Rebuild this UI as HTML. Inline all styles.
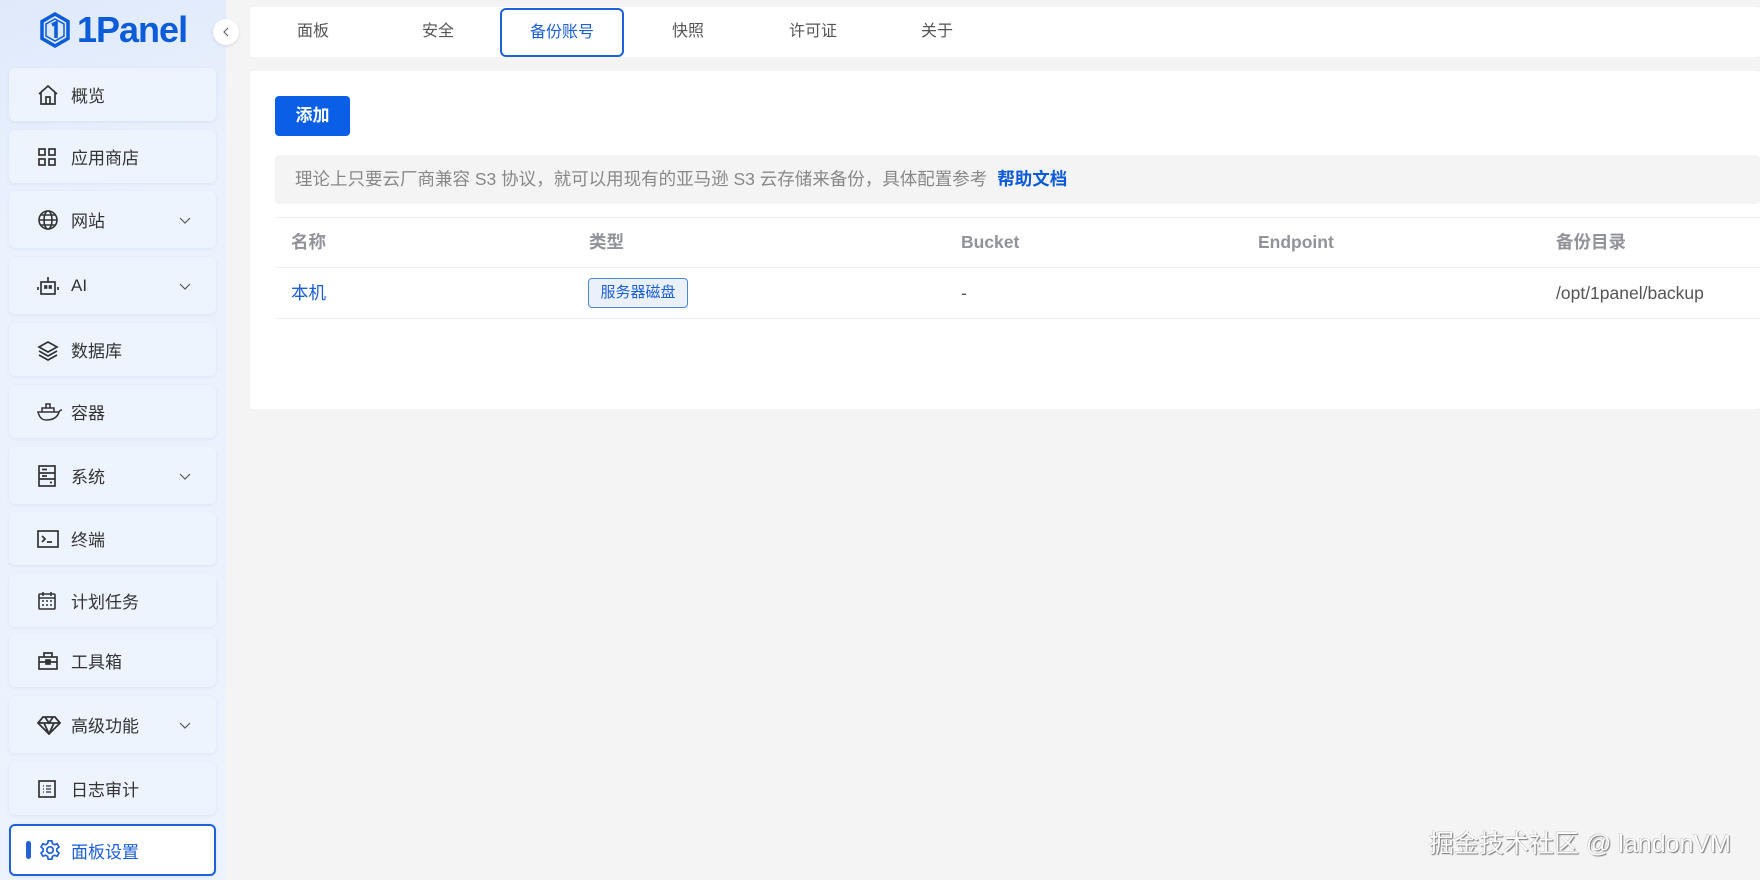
<!DOCTYPE html>
<html><head><meta charset="utf-8"><style>
*{margin:0;padding:0;box-sizing:border-box}
body{width:1760px;height:880px;overflow:hidden;background:#f4f4f5;font-family:"Liberation Sans","Noto Sans CJK SC",sans-serif;position:relative;color:#333}
.side{position:absolute;left:0;top:0;width:226px;height:880px;background:linear-gradient(160deg,#dfe9fb 0%,#ebf2fd 25%,#edf3fd 100%)}
.logo{position:absolute;left:39px;top:9px;display:flex;align-items:center;gap:6px}
.logo span{font-size:36px;font-weight:bold;color:#0a5cd8;letter-spacing:-1px}
.item{position:absolute;left:9px;width:207px;background:#eef4fe;border-radius:6px;box-shadow:0 1px 3px rgba(120,150,200,.15);display:flex;align-items:center;font-size:17px;color:#333}
.item svg{position:absolute;left:28px}
.item .t{position:absolute;left:62px}
.item .ch{position:absolute;left:168px;top:50%;margin-top:-6px}
.item.act{background:#fff;border:2px solid #1f62d6;color:#1b5ed6}
.bar{position:absolute;left:15px;width:5px;height:18px;border-radius:3px;background:#1f62d6}
.col{position:absolute;left:213px;top:19px;width:26px;height:26px;border-radius:50%;background:#fff;box-shadow:0 1px 3px rgba(0,0,0,.12)}
.tabs{position:absolute;left:250px;top:7px;width:1510px;height:50px;background:#fff;border-radius:4px}
.tab{position:absolute;top:0;height:50px;line-height:50px;font-size:16px;color:#555;transform:translateX(-50%)}
.tact{position:absolute;left:500px;top:8px;width:124px;height:49px;border:2px solid #1f62d6;border-radius:6px;color:#1b5ed6;font-size:16px;text-align:center;line-height:45px}
.card{position:absolute;left:250px;top:71px;width:1510px;height:338px;background:#fff;border-radius:4px}
.btn{position:absolute;left:275px;top:96px;width:75px;height:40px;background:#0a5fe6;border-radius:4px;color:#fff;font-size:17px;font-weight:bold;text-align:center;line-height:40px}
.note{position:absolute;left:275px;top:155px;width:1485px;height:49px;background:#f4f4f5;border-radius:4px;font-size:17.5px;color:#888;line-height:49px;padding-left:20px}
.note b{color:#0a5ad8;margin-left:10px}
.ln{position:absolute;left:275px;width:1485px;height:1px;background:#ebeef5}
.th{position:absolute;top:229px;height:26px;line-height:26px;font-size:17.5px;font-weight:bold;color:#909399}
.td{position:absolute;top:280px;height:26px;line-height:26px;font-size:17.5px;color:#555}
.tag{position:absolute;left:588px;top:278px;width:100px;height:30px;border:1px solid #4a85de;background:#eaf1fc;border-radius:4px;color:#1b5ed6;font-size:15px;text-align:center;line-height:28px}
.wm{position:absolute;left:1429px;top:824px;font-size:25px;color:#fff;text-shadow:1px 1px 1px #777,-0.5px -0.5px 0 #bbb}
</style></head><body>
<div class="side">
<div class="logo"><svg width="32" height="36" viewBox="0 0 32 36"><path d="M16 2 L29 9.5 V26.5 L16 34 L3 26.5 V9.5Z" fill="none" stroke="#0a5cd8" stroke-width="3.5"/><path d="M16 7 L25 12 V24 L16 29 L7 24 V12Z" fill="#dbe7fb" stroke="#0a5cd8" stroke-width="1.5"/><path d="M13 13 L17 11 V26" fill="none" stroke="#0a5cd8" stroke-width="3.5"/></svg><span>1Panel</span></div>
<div class="col"><svg width="26" height="26"><path d="M15 9 L11 13 L15 17" fill="none" stroke="#666" stroke-width="1.2"/></svg></div>

<div class="item" style="top:68px;height:53px"><svg width="22" height="22" viewBox="0 0 22 22" fill="none" stroke="#333" stroke-width="1.7"><path d="M2 10 L11 2 L20 10 M4 8 V20 H18 V8 M9 20 V13 H13 V20"/></svg><span class="t">概览</span></div>
<div class="item" style="top:130px;height:53px"><svg width="20" height="20" viewBox="0 0 20 20" fill="none" stroke="#333" stroke-width="1.7"><rect x="2" y="2" width="6" height="6"/><rect x="12" y="2" width="6" height="6"/><rect x="2" y="12" width="6" height="6"/><rect x="12" y="12" width="6" height="6"/></svg><span class="t">应用商店</span></div>
<div class="item" style="top:191px;height:57px"><svg width="22" height="22" viewBox="0 0 22 22" fill="none" stroke="#333" stroke-width="1.6"><circle cx="11" cy="11" r="9"/><ellipse cx="11" cy="11" rx="4" ry="9"/><path d="M2 11 H20 M4 6 H18 M4 16 H18"/></svg><span class="t">网站</span><svg class="ch" width="12" height="12" style="left:170px"><path d="M1 4 L6 9 L11 4" fill="none" stroke="#555" stroke-width="1.2"/></svg></div>
<div class="item" style="top:257px;height:57px"><svg width="22" height="22" viewBox="0 0 22 22" fill="none" stroke="#333" stroke-width="1.7"><rect x="4" y="7" width="14" height="12"/><path d="M11 2 V7 M1 12 V15 M21 12 V15"/><rect x="8" y="11" width="1.5" height="2" fill="#333"/><rect x="12.5" y="11" width="1.5" height="2" fill="#333"/></svg><span class="t">AI</span><svg class="ch" width="12" height="12" style="left:170px"><path d="M1 4 L6 9 L11 4" fill="none" stroke="#555" stroke-width="1.2"/></svg></div>
<div class="item" style="top:323px;height:53px"><svg width="22" height="22" viewBox="0 0 22 22" fill="none" stroke="#333" stroke-width="1.7"><path d="M11 3 L20 8 L11 13 L2 8Z M2 12 L11 17 L20 12 M2 16 L11 21 L20 16"/></svg><span class="t">数据库</span></div>
<div class="item" style="top:385px;height:53px"><svg width="26" height="20" viewBox="0 0 26 20" fill="none" stroke="#333" stroke-width="1.5"><path d="M1 10 H22 C20 17 14 18 9 18 C4 18 2 14 1 10Z M5 10 V6 H17 V10 M9 6 V2 H13 V6 M22 10 C23 8 24 8 25 8"/></svg><span class="t">容器</span></div>
<div class="item" style="top:447px;height:57px"><svg width="20" height="22" viewBox="0 0 20 22" fill="none" stroke="#333" stroke-width="1.7"><rect x="2" y="1" width="16" height="20"/><path d="M2 8 H18 M2 14 H18 M5 4.5 H10 M5 11 H10 M13 17.5 H15"/></svg><span class="t">系统</span><svg class="ch" width="12" height="12" style="left:170px"><path d="M1 4 L6 9 L11 4" fill="none" stroke="#555" stroke-width="1.2"/></svg></div>
<div class="item" style="top:512px;height:53px"><svg width="22" height="20" viewBox="0 0 22 20" fill="none" stroke="#333" stroke-width="1.7"><rect x="1" y="2" width="20" height="16"/><path d="M5 7 L8 10 L5 13 M10 13 H15"/></svg><span class="t">终端</span></div>
<div class="item" style="top:574px;height:53px"><svg width="20" height="20" viewBox="0 0 20 20" fill="none" stroke="#333" stroke-width="1.6"><rect x="2" y="3" width="16" height="15" rx="1"/><path d="M6 1 V5 M14 1 V5 M2 7 H18"/><path d="M5 10 H7 M9 10 H11 M13 10 H15 M5 14 H7 M9 14 H11 M13 14 H15" stroke-width="1.5"/></svg><span class="t">计划任务</span></div>
<div class="item" style="top:634px;height:53px"><svg width="22" height="20" viewBox="0 0 22 20" fill="none" stroke="#333" stroke-width="1.7"><rect x="2" y="6" width="18" height="12"/><path d="M7 6 V2 H15 V6 M2 11 H20"/><rect x="9" y="9" width="4" height="4" fill="#333"/></svg><span class="t">工具箱</span></div>
<div class="item" style="top:696px;height:57px"><svg width="24" height="20" viewBox="0 0 24 20" fill="none" stroke="#333" stroke-width="1.8"><path d="M6 2 H18 L23 8 L12 19 L1 8Z M1 8 H23 M8 2 L12 8 L16 2 M7 8 L12 19 L17 8"/></svg><span class="t">高级功能</span><svg class="ch" width="12" height="12" style="left:170px"><path d="M1 4 L6 9 L11 4" fill="none" stroke="#555" stroke-width="1.2"/></svg></div>
<div class="item" style="top:762px;height:53px"><svg width="20" height="20" viewBox="0 0 20 20" fill="none" stroke="#333" stroke-width="1.7"><rect x="2" y="2" width="16" height="16"/><path d="M6 7 H7 M9 7 H14 M6 10 H7 M9 10 H14 M6 13 H7 M9 13 H14" stroke-width="1.3"/></svg><span class="t">日志审计</span></div>
<div class="item act" style="top:824px;height:52px"><div class="bar"></div><svg width="22" height="22" viewBox="0 0 24 24" fill="none" stroke="#1b5ed6" stroke-width="1.8" style="left:28px"><path d="M10 2 H14 L14.6 5 L17 6.3 L19.8 5.2 L21.8 8.7 L19.5 10.7 V13.3 L21.8 15.3 L19.8 18.8 L17 17.7 L14.6 19 L14 22 H10 L9.4 19 L7 17.7 L4.2 18.8 L2.2 15.3 L4.5 13.3 V10.7 L2.2 8.7 L4.2 5.2 L7 6.3 L9.4 5Z"/><circle cx="12" cy="12" r="3.5"/></svg><span class="t" style="left:60px">面板设置</span></div>
</div>

<div class="tabs">
<div class="tab" style="left:63px">面板</div>
<div class="tab" style="left:188px">安全</div>
<div class="tab" style="left:438px">快照</div>
<div class="tab" style="left:563px">许可证</div>
<div class="tab" style="left:687px">关于</div>
</div>
<div class="tact">备份账号</div>

<div class="card"></div>
<div class="btn">添加</div>
<div class="note">理论上只要云厂商兼容 S3 协议，就可以用现有的亚马逊 S3 云存储来备份，具体配置参考<b>帮助文档</b></div>
<div class="ln" style="top:217px"></div>
<div class="ln" style="top:267px"></div>
<div class="ln" style="top:318px"></div>
<div class="th" style="left:291px">名称</div>
<div class="th" style="left:589px">类型</div>
<div class="th" style="left:961px">Bucket</div>
<div class="th" style="left:1258px">Endpoint</div>
<div class="th" style="left:1556px">备份目录</div>
<div class="td" style="left:291px;color:#1b5ed6">本机</div>
<div class="tag">服务器磁盘</div>
<div class="td" style="left:961px">-</div>
<div class="td" style="left:1556px">/opt/1panel/backup</div>

<div class="wm">掘金技术社区 @ landonVM</div>
</body></html>
